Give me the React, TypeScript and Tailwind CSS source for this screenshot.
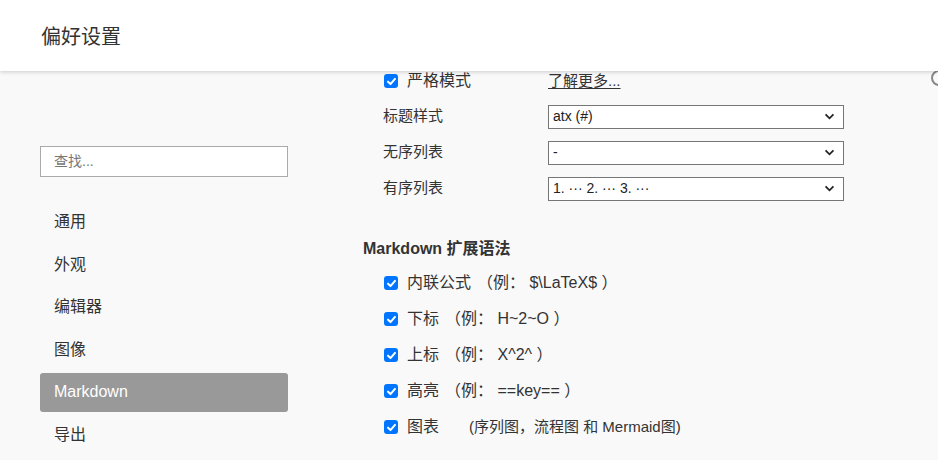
const NAV = ["通用", "外观", "编辑器", "图像", "Markdown", "导出"];

const SELECTS = [
  { label: "标题样式", value: "atx (#)" },
  { label: "无序列表", value: "-" },
  { label: "有序列表", value: "1. ··· 2. ··· 3. ···" },
];

const EXTRAS = [
  { label: "内联公式", hint: "（例： $\\LaTeX$ ）" },
  { label: "下标", hint: "（例： H~2~O ）" },
  { label: "上标", hint: "（例： X^2^ ）" },
  { label: "高亮", hint: "（例： ==key== ）" },
];

function Check() {
  return (
    <span className="flex h-[14px] w-[14px] shrink-0 items-center justify-center rounded-[3px] bg-[#0075ff]">
      <svg viewBox="0 0 12 12" className="h-[11px] w-[11px]">
        <path d="M2.2 6.2 L4.9 8.8 L9.8 3.2" fill="none" stroke="#fff" strokeWidth="2.2" strokeLinecap="round" strokeLinejoin="round" />
      </svg>
    </span>
  );
}

function Select({ value }: { value: string }) {
  return (
    <div className="flex h-[24px] w-[296px] items-center justify-between border border-[#767676] bg-white pl-[4px] pr-[8px] text-[14px] text-[#222]">
      <span>{value}</span>
      <svg viewBox="0 0 12 8" className="h-[7px] w-[11px]">
        <path d="M1.5 1.5 L6 6 L10.5 1.5" fill="none" stroke="#222" strokeWidth="2" />
      </svg>
    </div>
  );
}

export default function App() {
  return (
    <div
      className="relative flex h-[460px] w-[938px] flex-col overflow-hidden bg-[#f9f9f9] text-[#333]"
      style={{ fontFamily: '"Liberation Sans", "Noto Sans CJK SC", sans-serif' }}
    >
      <header className="relative z-10 flex h-[71px] shrink-0 items-center bg-white pl-[41px] pt-[2px] shadow-[0_1px_4px_rgba(0,0,0,0.18)]">
        <h1 className="text-[20px] text-[#333]">偏好设置</h1>
      </header>

      <div className="flex flex-1">
        <aside className="w-[363px] shrink-0 pl-[40px] pt-[75px]">
          <div className="flex h-[31px] w-[248px] items-center border border-[#aaa] bg-white pl-[13px] text-[14px] text-[#777]">
            查找...
          </div>
          <nav className="mt-[25.5px] flex w-[248px] flex-col gap-[3.5px]">
            {NAV.map((item) => (
              <div
                key={item}
                className={
                  item === "Markdown"
                    ? "flex h-[39px] items-center rounded-[3px] bg-[#999] pl-[14px] text-[16px] text-white"
                    : "flex h-[39px] items-center pl-[14px] text-[16px] text-[#333]"
                }
              >
                {item}
              </div>
            ))}
          </nav>
        </aside>

        <main className="flex-1">
          <div className="flex h-[20px] items-center pl-[21px]">
            <Check />
            <span className="ml-[9px] w-[141px] text-[16px]">严格模式</span>
            <span className="text-[15px] underline underline-offset-2">了解更多...</span>
          </div>

          <div className="mt-[7.5px] flex flex-col">
            {SELECTS.map((s) => (
              <div key={s.label} className="flex h-[36px] items-center pl-[20px]">
                <span className="w-[165px] text-[15px]">{s.label}</span>
                <Select value={s.value} />
              </div>
            ))}
          </div>

          <h2 className="mt-[26.5px] flex h-[32px] items-center text-[16px] font-bold">Markdown 扩展语法</h2>

          <div className="flex flex-col">
            {EXTRAS.map((e) => (
              <div key={e.label} className="flex h-[36px] items-center pl-[21px] text-[16px]">
                <Check />
                <span className="ml-[9px]">{e.label}</span>
                <span className="ml-[6px]">{e.hint}</span>
              </div>
            ))}
            <div className="flex h-[36px] items-center pl-[21px] text-[16px]">
              <Check />
              <span className="ml-[9px]">图表</span>
              <span className="ml-[30px] text-[15px]">(序列图，流程图 和 Mermaid图)</span>
            </div>
          </div>
        </main>
      </div>

      <span className="absolute right-[-9px] top-[70px] h-[16px] w-[16px] rounded-full border-2 border-[#888]" />
    </div>
  );
}
